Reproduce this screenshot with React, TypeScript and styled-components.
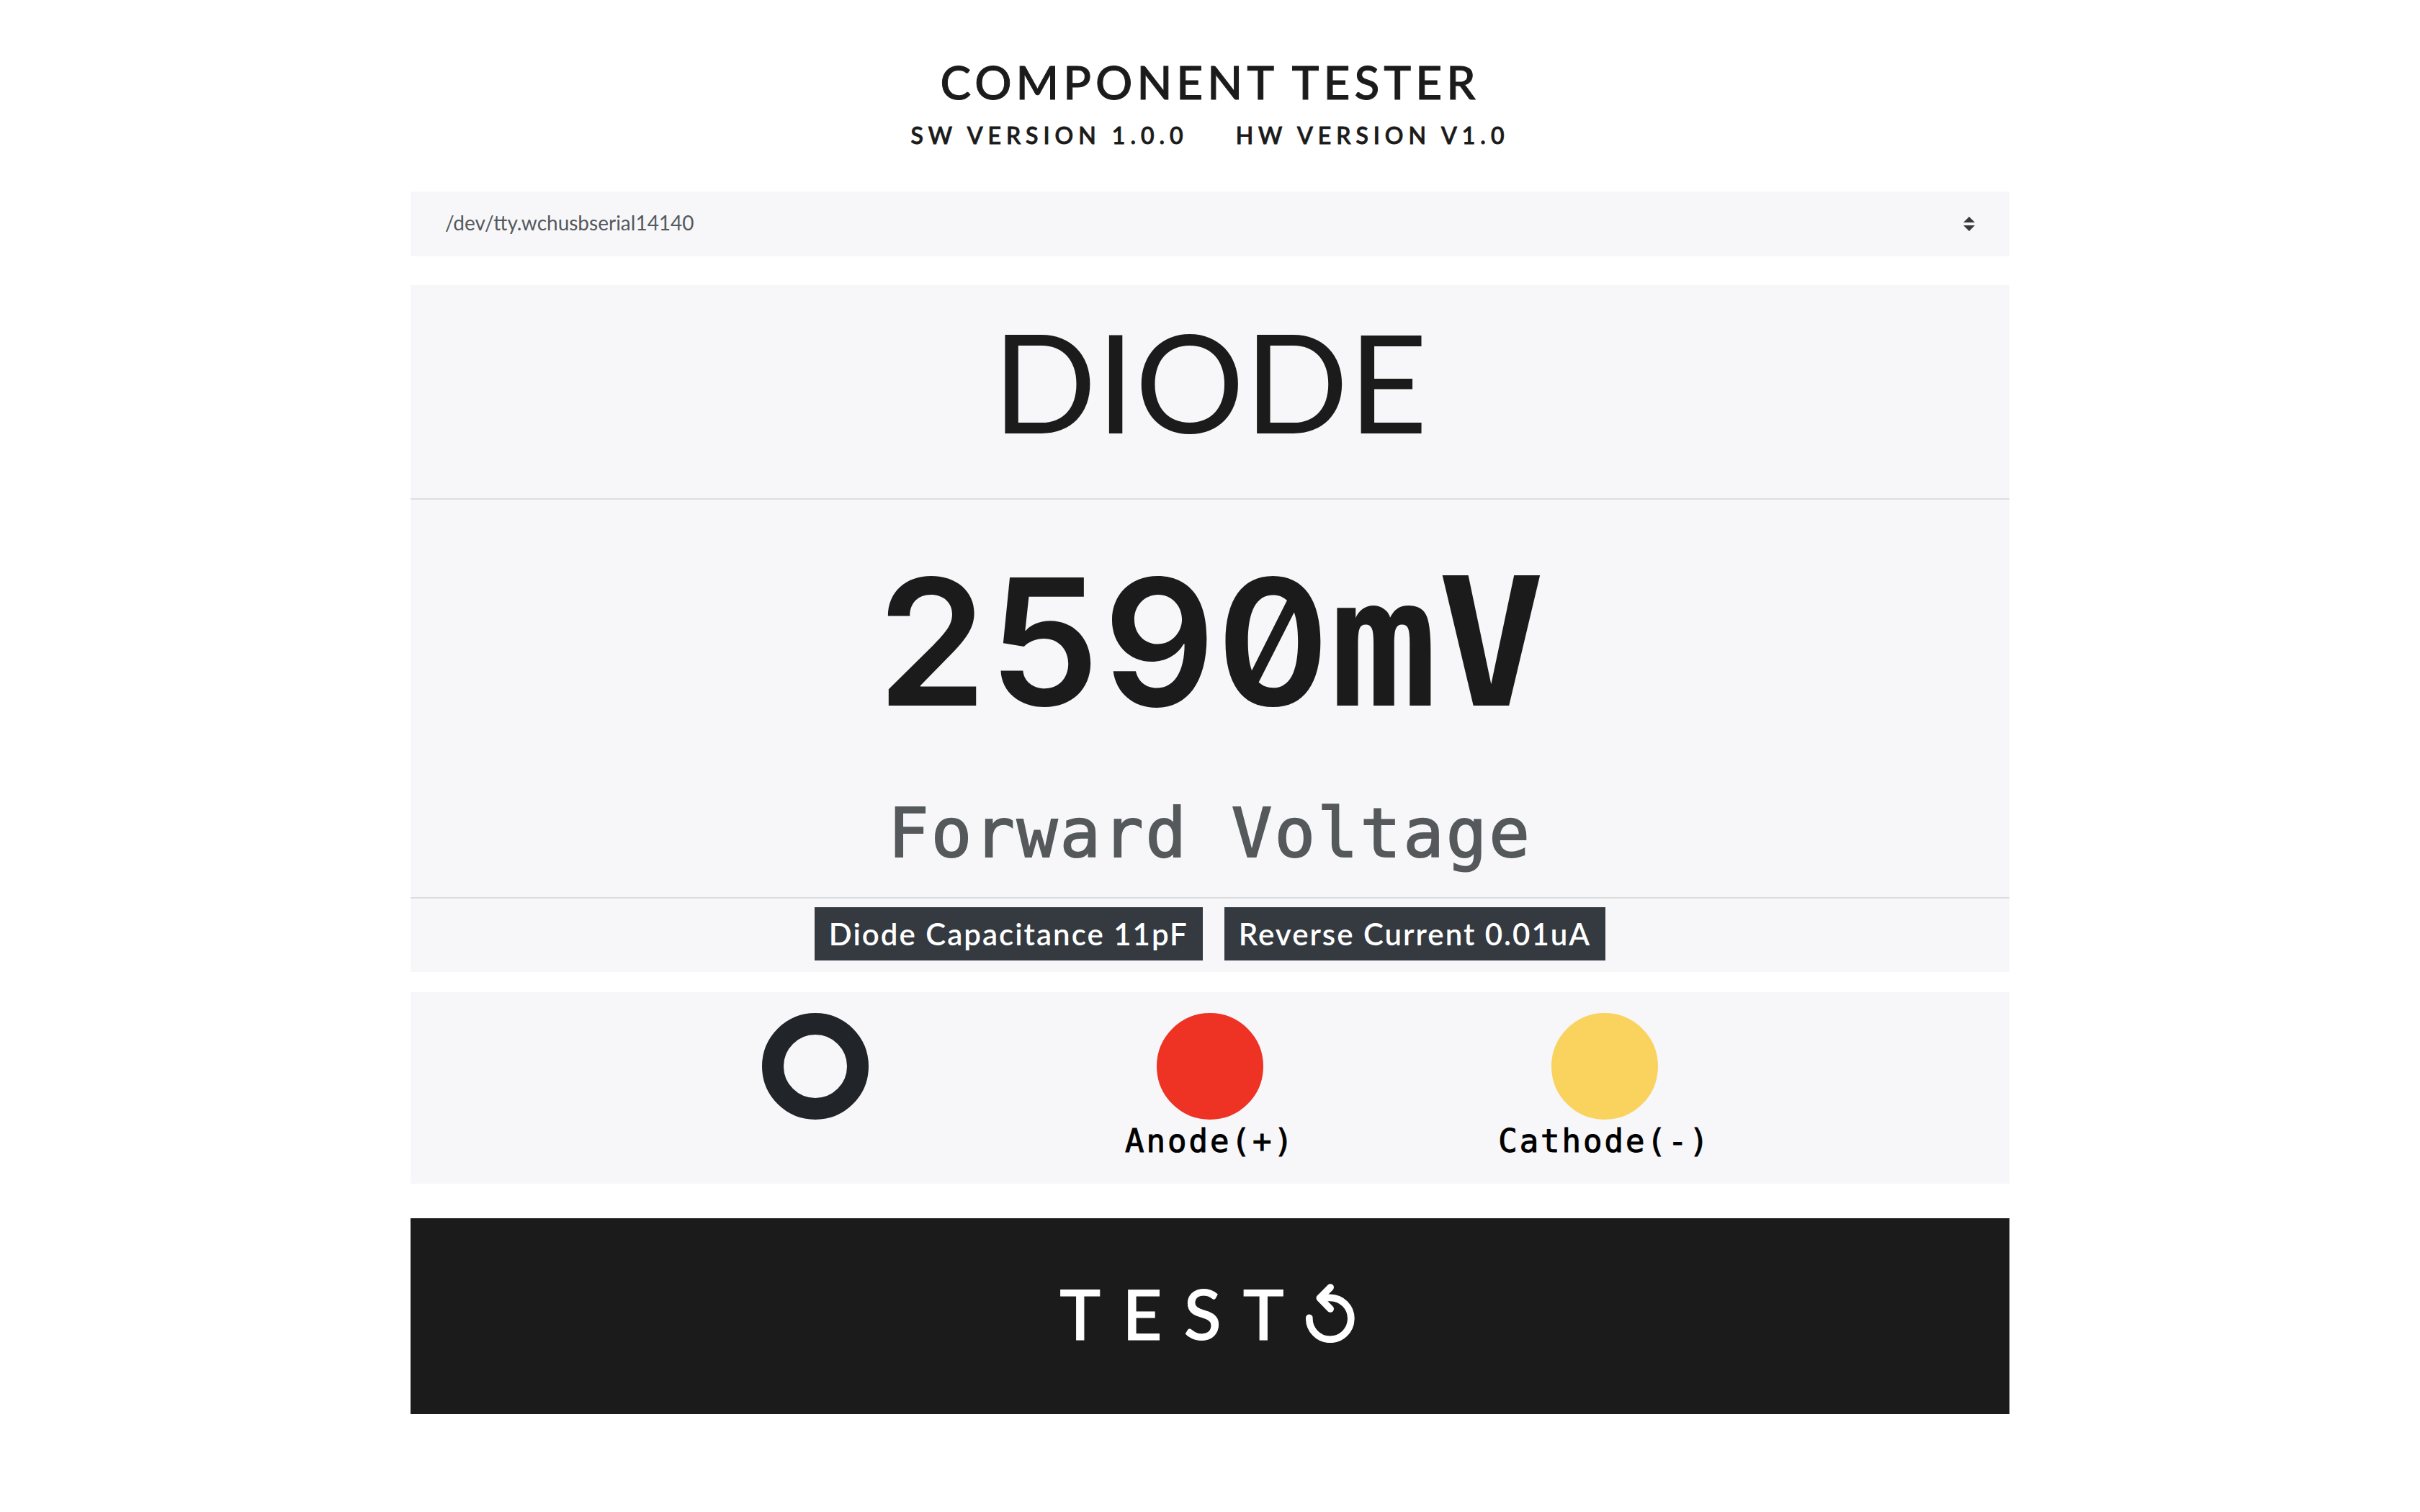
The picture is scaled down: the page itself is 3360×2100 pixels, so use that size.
import React, { useState } from "react";
import styled, { createGlobalStyle } from "styled-components";

const sans = `Lato, "Open Sans", sans-serif`;
const mono = `"DejaVu Sans Mono", "Liberation Mono", monospace`;

const GlobalStyle = createGlobalStyle`
  * { box-sizing: border-box; }
  body { margin: 0; background: #fff; color: #1b1b1b; font-family: ${sans}; }
  h1, h2, p, ul { margin: 0; padding: 0; }
`;

const Page = styled.main`
  width: calc(100% - 60px);
  max-width: 2220px;
  margin: 0 auto;
  padding: 74px 0 64px;
`;

const Header = styled.header`
  text-align: center;
  -webkit-text-stroke: 1px currentColor;
`;

const Title = styled.h1`
  font-size: 64px;
  line-height: 80px;
  font-weight: 500;
  letter-spacing: 6px;
`;

const Versions = styled.div`
  display: flex;
  justify-content: center;
  gap: 66px;
  margin-top: 14px;
  font-size: 32px;
  line-height: 40px;
  font-weight: 500;
  letter-spacing: 7px;
`;

const PortField = styled.div`
  position: relative;
  display: flex;
  align-items: center;
  margin-top: 58px;
`;

const PortSelect = styled.select`
  appearance: none;
  width: 100%;
  height: 90px;
  padding: 0 96px 4px 48px;
  border: 0;
  border-radius: 0;
  background: #f7f7fa;
  color: #55595c;
  font-family: ${sans};
  font-size: 28px;
`;

const PortArrows = styled.svg`
  position: absolute;
  right: 48px;
  width: 16px;
  height: 20px;
  pointer-events: none;
`;

const Panel = styled.section`
  background: #f7f7fa;
  text-align: center;
`;

const Result = styled(Panel)`
  margin-top: 40px;
`;

const PartName = styled.h2`
  padding: 12px 0 44px;
  font-size: 190px;
  line-height: 240px;
  font-weight: 400;
`;

const Reading = styled.div`
  border: solid #dddddf;
  border-width: 2px 0;
  padding: 38px 0 28px;
`;

const Value = styled.p`
  font-family: ${mono};
  font-size: 248px;
  line-height: 324px;
  font-weight: 700;
`;

const Digits = styled.span`
  font-family: Inter, ${sans};
  font-weight: 600;
  font-size: 244px;
  line-height: 1;
  font-variant-numeric: tabular-nums slashed-zero;
`;

const Caption = styled.p`
  margin-top: 42px;
  font-family: ${mono};
  font-size: 94px;
  line-height: 120px;
  letter-spacing: 3px;
  color: #55595c;
  -webkit-text-stroke: 2px currentColor;
`;

const Badges = styled.ul`
  display: flex;
  justify-content: center;
  gap: 30px;
  padding: 12px 0 16px;
  list-style: none;
`;

const Badge = styled.li`
  padding: 0 20px;
  background: #343a40;
  color: #fff;
  font-size: 42px;
  line-height: 74px;
  font-weight: 600;
  letter-spacing: 2px;
`;

const Pins = styled(Panel)`
  display: grid;
  grid-template-columns: repeat(3, 1fr);
  margin-top: 28px;
  padding: 29px 13% 29px;
`;

const Pin = styled.div`
  display: flex;
  flex-direction: column;
  align-items: center;
`;

const Dot = styled.span<{ $color: string; $hollow?: boolean }>`
  width: 148px;
  height: 148px;
  border: 30px solid ${(p) => p.$color};
  border-radius: 50%;
  background: ${(p) => (p.$hollow ? "transparent" : p.$color)};
`;

const PinLabel = styled.span`
  min-height: 60px;
  font-family: ${mono};
  font-size: 44px;
  line-height: 60px;
  letter-spacing: 3px;
  color: #000;
  -webkit-text-stroke: 1px currentColor;
`;

const TestButton = styled.button`
  display: flex;
  align-items: center;
  justify-content: center;
  width: 100%;
  height: 272px;
  margin-top: 48px;
  padding: 0 8px 8px 0;
  border: 0;
  background: #1b1b1b;
  color: #fff;
  font-family: ${sans};
  font-size: 96px;
  line-height: 120px;
  font-weight: 500;
  letter-spacing: 30px;
  -webkit-text-stroke: 1px currentColor;
`;

const RotateIcon = styled.svg`
  width: 68px;
  height: 82px;
  fill: none;
  stroke: currentColor;
  stroke-width: 29;
  stroke-linecap: round;
  stroke-linejoin: round;
`;

const ports = ["/dev/tty.wchusbserial14140"];
const details = ["Diode Capacitance 11pF", "Reverse Current 0.01uA"];
const pins = [
  { color: "#212529", label: "", hollow: true },
  { color: "#ee3224", label: "Anode(+)" },
  { color: "#fad35f", label: "Cathode(-)" },
];

export default function App() {
  const [port, setPort] = useState(ports[0]);
  return (
    <>
      <GlobalStyle />
      <Page>
        <Header>
          <Title>COMPONENT TESTER</Title>
          <Versions>
            <span>SW VERSION 1.0.0</span>
            <span>HW VERSION V1.0</span>
          </Versions>
        </Header>
        <PortField>
          <PortSelect aria-label="Serial port" value={port} onChange={(e) => setPort(e.target.value)}>
            {ports.map((name) => (
              <option key={name}>{name}</option>
            ))}
          </PortSelect>
          <PortArrows viewBox="0 0 4 5" aria-hidden="true">
            <path fill="#343a40" d="M2 0L0 2h4zm0 5L0 3h4z" />
          </PortArrows>
        </PortField>
        <Result>
          <PartName>DIODE</PartName>
          <Reading>
            <Value>
              <Digits>2590</Digits>mV
            </Value>
            <Caption>Forward Voltage</Caption>
          </Reading>
          <Badges>
            {details.map((text) => (
              <Badge key={text}>{text}</Badge>
            ))}
          </Badges>
        </Result>
        <Pins>
          {pins.map((pin) => (
            <Pin key={pin.color}>
              <Dot $color={pin.color} $hollow={pin.hollow} />
              <PinLabel>{pin.label}</PinLabel>
            </Pin>
          ))}
        </Pins>
        <TestButton type="button">
          TEST
          <RotateIcon viewBox="0 0 204 246" aria-hidden="true">
            <path d="M14.5 142A87 87 0 1 0 101.5 58H60" />
            <path d="M102.5 15L58 59.5L102.5 105" />
          </RotateIcon>
        </TestButton>
      </Page>
    </>
  );
}
